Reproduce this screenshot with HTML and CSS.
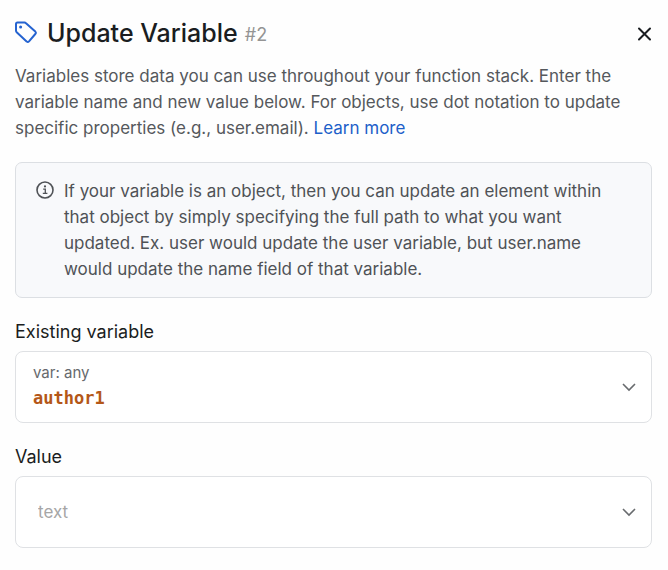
FILE: index.html
```html
<!DOCTYPE html>
<html lang="en">
<head>
    <meta charset="UTF-8">
    <meta name="viewport" content="width=device-width, initial-scale=1.0">
    <title>Update Variable</title>
    <link rel="stylesheet" href="styles.css">
</head>
<body>
    <form class="panel">
        <header class="panel-header">
            <svg class="tag-icon" width="24" height="24" viewBox="0 0 24 24" fill="none" stroke="currentColor" stroke-width="2" stroke-linejoin="round">
                <path d="M1 3 Q1 1.5 2.5 1.5 H9.5 Q10.3 1.5 11 2.2 L20.3 10.6 Q21.5 11.8 20.3 13 L14 20.4 Q12.8 21.6 11.6 20.4 L1.7 11.2 Q1 10.5 1 9.5 Z"/>
                <circle cx="5.6" cy="6" r="1.5" fill="currentColor" stroke="none"/>
            </svg>
            <h1>Update Variable</h1>
            <span class="step">#2</span>
            <button type="button" class="close" aria-label="Close">
                <svg width="16" height="16" viewBox="0 0 16 16" fill="none" stroke="currentColor" stroke-width="2" stroke-linecap="round">
                    <path d="M3 3.5 L14 14.5 M14 3.5 L3 14.5"/>
                </svg>
            </button>
        </header>

        <p class="description">Variables store data you can use throughout your function stack. Enter the variable name and new value below. For objects, use dot notation to update specific properties (e.g., user.email). <a href="#">Learn more</a></p>

        <div class="info">
            <svg width="20" height="20" viewBox="0 0 20 20" fill="none" stroke="currentColor">
                <circle cx="10" cy="10" r="8" stroke-width="1.6"/>
                <path d="M8.2 9.2 H10.3 V13.4 M7.8 13.4 H12.4" stroke-width="1.3"/>
                <circle cx="10" cy="6.4" r="1.1" fill="currentColor" stroke="none"/>
            </svg>
            <p>If your variable is an object, then you can update an element within that object by simply specifying the full path to what you want updated. Ex. user would update the user variable, but user.name would update the name field of that variable.</p>
        </div>

        <label class="label" for="variable">Existing variable</label>
        <div class="field">
            <div class="field-body">
                <span class="type">var: any</span>
                <select id="variable" class="variable">
                    <option>author1</option>
                </select>
            </div>
            <svg class="chevron" width="16" height="16" viewBox="0 0 16 16" fill="none" stroke="currentColor" stroke-width="1.6">
                <path d="M2 5 L8 11 L14 5"/>
            </svg>
        </div>

        <label class="label" for="value">Value</label>
        <div class="field">
            <input type="text" id="value" class="value" placeholder="text">
            <button type="button" class="toggle" aria-label="Show options">
                <svg class="chevron" width="16" height="16" viewBox="0 0 16 16" fill="none" stroke="currentColor" stroke-width="1.6">
                    <path d="M2 5 L8 11 L14 5"/>
                </svg>
            </button>
        </div>
    </form>
</body>
</html>
```

FILE: styles.css
```css
* {
    box-sizing: border-box;
}

body {
    margin: 0;
    background-color: #fefefe;
    color: #1a1d21;
    font-family: Inter, "Liberation Sans", sans-serif;
    font-size: 17px;
    line-height: 26px;
}

h1, p {
    margin: 0;
}

button {
    display: flex;
    padding: 0;
    border: none;
    background: none;
    color: inherit;
    cursor: pointer;
}

svg {
    flex: none;
}

.panel {
    padding: 17px 16px 20px 15px;
}

.panel-header {
    display: flex;
    align-items: center;
    margin-bottom: 14px;
}

.tag-icon {
    margin-right: 8px;
    color: #2563d0;
}

h1 {
    font-size: 25px;
    font-weight: 500;
    line-height: 32px;
}

.step {
    margin: 4px 0 0 7px;
    color: #949494;
    font-size: 18px;
}

.close {
    margin-left: auto;
}

.description {
    color: #55585c;
}

.description a {
    color: #1d5fc9;
    text-decoration: none;
}

.info {
    display: flex;
    gap: 9px;
    margin-top: 21px;
    padding: 15px 19px;
    border: 1px solid #dcdfe3;
    border-radius: 7px;
    background-color: #f8f9fb;
    color: #4f5256;
}

.info svg {
    margin-top: 2px;
}

.label {
    display: block;
    margin: 21px 0 6px;
    font-size: 18px;
}

.field {
    display: flex;
    align-items: center;
    height: 72px;
    padding: 0 14px 0 17px;
    border: 1px solid #dfe1e4;
    border-radius: 8px;
    background-color: #fff;
}

.field-body {
    flex: 1;
    display: flex;
    flex-direction: column;
    padding-bottom: 2px;
}

.type {
    color: #66696d;
    font-size: 15px;
    line-height: 24px;
}

.variable {
    appearance: none;
    padding: 0;
    border: none;
    outline: none;
    background: none;
    color: #b45718;
    font-family: "DejaVu Sans Mono", monospace;
    font-size: 17px;
    font-weight: 700;
    line-height: 26px;
}

.value {
    flex: 1;
    min-width: 0;
    padding: 0 5px;
    border: none;
    outline: none;
    background: none;
    color: inherit;
    font-family: inherit;
    font-size: 17px;
    line-height: 26px;
}

.value::placeholder {
    color: #a6a6a6;
}

.chevron {
    color: #686b6e;
}
```
